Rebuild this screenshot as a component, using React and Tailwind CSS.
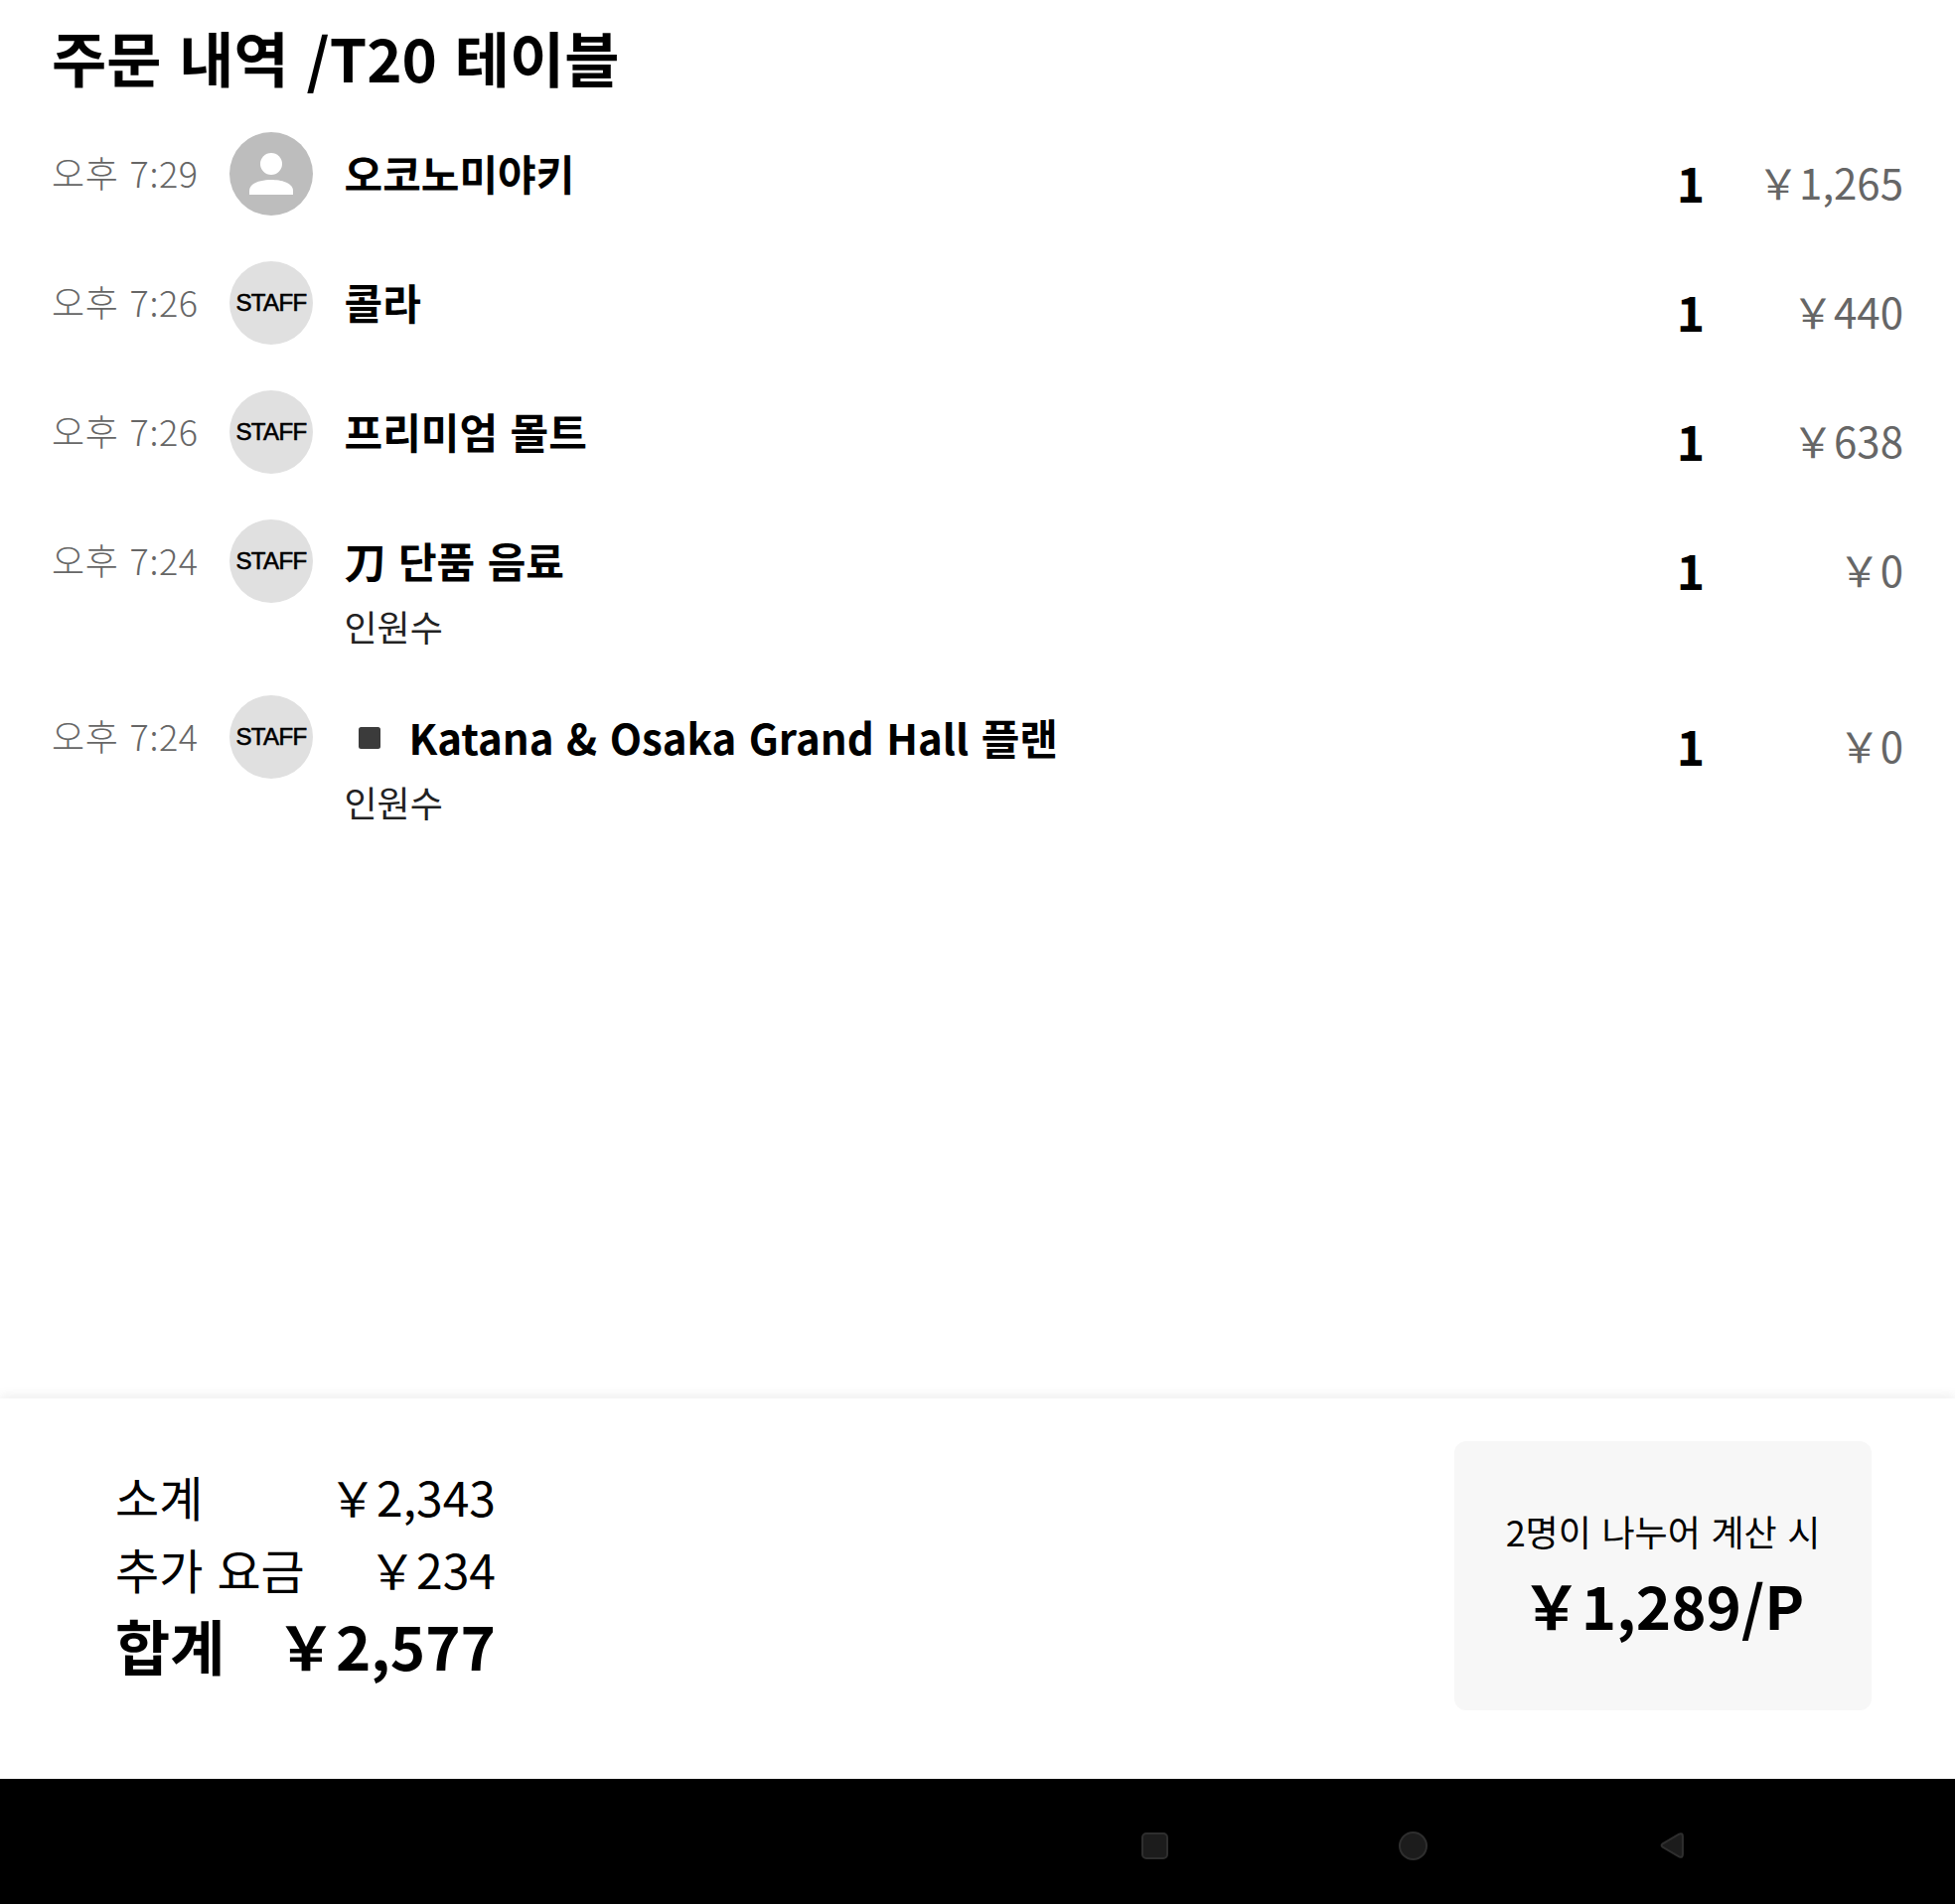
import React from "react";

const KR = "font-['Noto_Sans_CJK_KR',sans-serif]";

const rows = [
  { time: "오후 7:29", staff: false, name: "오코노미야키", price: "￥1,265" },
  { time: "오후 7:26", staff: true, name: "콜라", price: "￥440" },
  { time: "오후 7:26", staff: true, name: "프리미엄 몰트", price: "￥638" },
  { time: "오후 7:24", staff: true, name: "刀 단품 음료", sub: "인원수", price: "￥0" },
  { time: "오후 7:24", staff: true, name: "Katana & Osaka Grand Hall 플랜", icon: true, sub: "인원수", price: "￥0" },
];

function Avatar({ staff }) {
  if (staff) {
    return (
      <div className="flex h-[84px] w-[84px] shrink-0 items-center justify-center rounded-full bg-[#e0e0e0] font-['Liberation_Sans',sans-serif] text-[24px] tracking-[-0.6px] text-black [-webkit-text-stroke:0.6px_black]">
        STAFF
      </div>
    );
  }
  return (
    <div className="flex h-[84px] w-[84px] shrink-0 items-center justify-center rounded-full bg-[#bdbdbd]">
      <svg width="44" height="42" viewBox="0 0 44 42" fill="white">
        <ellipse cx="22" cy="11" rx="11" ry="11" />
        <path d="M0 42v-4C0 30 12 27 22 27s22 3 22 11v4z" />
      </svg>
    </div>
  );
}

function Row({ r }) {
  return (
    <div className="flex items-start">
      <div className="w-[179px] shrink-0 pt-[13px] text-[36px] leading-[54px] font-light tracking-[0.6px] text-[#666666] [word-spacing:0.07em]">{r.time}</div>
      <Avatar staff={r.staff} />
      <div className="ml-[31.5px] min-w-0 flex-1">
        <div className="flex items-center pt-[9px] pb-[1px] text-[42px] leading-[64px] font-bold text-black [word-spacing:0.07em]">
          {r.icon && (
            <svg className="mt-[4px] mr-[28px] ml-[13px] shrink-0" width="24" height="24" viewBox="0 0 24 24">
              <rect x="1" y="1" width="22" height="22" rx="2.5" fill="#3b3b3b" />
            </svg>
          )}
          <span className={r.icon ? "relative top-[1px]" : ""}>{r.name}</span>
        </div>
        {r.sub && <div className="mt-[9px] text-[36px] leading-[48px] font-normal text-[#222222]">{r.sub}</div>}
      </div>
      <div className="w-[40px] shrink-0 pt-[16px] text-center text-[48px] leading-[68px] font-bold text-black">1</div>
      <div className="w-[194px] shrink-0 pt-[17px] text-right text-[42px] leading-[66px] font-normal text-[#666666]">{r.price}</div>
    </div>
  );
}

export default function App() {
  return (
    <div className={`${KR} flex h-[1917px] w-[1968px] flex-col overflow-hidden bg-white`}>
      <main className="flex-1 pr-[52px] pl-[52px]">
        <h1 className="pt-[13px] pb-[32px] text-[60px] leading-[88px] font-bold text-black [word-spacing:0.07em]">주문 내역 /T20 테이블</h1>
        <div className="flex flex-col gap-[46px]">
          {rows.map((r, i) => (
            <Row key={i} r={r} />
          ))}
        </div>
      </main>
      <footer className="flex h-[383px] items-start justify-between bg-white pt-[43px] pr-[84px] pl-[116px] shadow-[0_-2px_12px_rgba(0,0,0,0.08)]">
        <div className="mt-[19px] w-[383px] text-black">
          <div className="flex justify-between text-[48px] leading-[72px] font-normal">
            <span>소계</span>
            <span>￥2,343</span>
          </div>
          <div className="flex justify-between text-[48px] leading-[74px] font-normal">
            <span className="[word-spacing:0.07em]">추가 요금</span>
            <span>￥234</span>
          </div>
          <div className="flex justify-between text-[60px] leading-[80px] font-bold">
            <span>합계</span>
            <span>￥2,577</span>
          </div>
        </div>
        <div className="flex h-[271px] w-[420px] flex-col items-center justify-center rounded-[12px] bg-[#f7f7f7] pt-[2px] text-black">
          <div className="text-[36px] leading-[54px] font-normal [word-spacing:0.07em]">2명이 나누어 계산 시</div>
          <div className="text-[60px] leading-[94px] font-bold">￥1,289/P</div>
        </div>
      </footer>
      <nav className="flex h-[126px] items-center bg-black pt-[8px] pl-[1149px]">
        <div className="h-[27px] w-[27px] rounded-[5px] border-[2px] border-[#2e2e2e] bg-[#1c1c1c]" />
        <div className="ml-[232px] h-[29px] w-[29px] rounded-full border-[2px] border-[#2e2e2e] bg-[#1c1c1c]" />
        <svg className="ml-[233px]" width="26" height="28" viewBox="0 0 24 27">
          <path d="M3 12 L19 2.5 Q22.5 1 22.5 5 V22 Q22.5 26 19 24.5 L3 15 Q1 13.5 3 12Z" fill="#1c1c1c" stroke="#2e2e2e" strokeWidth="2" strokeLinejoin="round" />
        </svg>
      </nav>
    </div>
  );
}
